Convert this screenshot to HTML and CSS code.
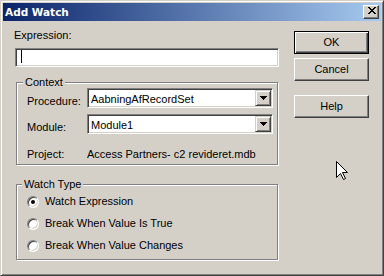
FILE: index.html
```html
<!DOCTYPE html>
<html>
<head>
<meta charset="utf-8">
<link rel="stylesheet" href="styles.css">
</head>
<body>
<div class="window">
  <div class="titlebar">
    <span class="title">Add Watch</span>
    <div class="close">
      <svg width="8" height="7" viewBox="0 0 8 7" shape-rendering="crispEdges"><path d="M0 0h2v1h-2zM6 0h2v1h-2zM1 1h2v1h-2zM5 1h2v1h-2zM2 2h4v1h-4zM3 3h2v1h-2zM2 4h4v1h-4zM1 5h2v1h-2zM5 5h2v1h-2zM0 6h2v1h-2zM6 6h2v1h-2z" fill="#000"/></svg>
    </div>
  </div>
  <div class="body">
    <div class="left">
      <div class="expr-label">Expression:</div>
      <div class="textbox"><span class="caret"></span></div>
      <div class="group context">
        <span class="legend">Context</span>
        <div class="row combo-row">
          <span class="row-label">Procedure:</span>
          <div class="combo"><span class="combo-value">AabningAfRecordSet</span><span class="drop"><svg width="7" height="4" viewBox="0 0 7 4" shape-rendering="crispEdges"><path d="M0 0h7v1h-1v1h-1v1h-1v1h-1v-1h-1v-1h-1v-1h-1z" fill="#000"/></svg></span></div>
        </div>
        <div class="row combo-row row-module">
          <span class="row-label">Module:</span>
          <div class="combo"><span class="combo-value">Module1</span><span class="drop"><svg width="7" height="4" viewBox="0 0 7 4" shape-rendering="crispEdges"><path d="M0 0h7v1h-1v1h-1v1h-1v1h-1v-1h-1v-1h-1v-1h-1z" fill="#000"/></svg></span></div>
        </div>
        <div class="row row-project">
          <span class="row-label">Project:</span>
          <span class="project-value">Access Partners- c2 revideret.mdb</span>
        </div>
      </div>
      <div class="group watch">
        <span class="legend">Watch Type</span>
        <div class="radio-row"><span class="radio checked"></span><span>Watch Expression</span></div>
        <div class="radio-row"><span class="radio"></span><span>Break When Value Is True</span></div>
        <div class="radio-row"><span class="radio"></span><span>Break When Value Changes</span></div>
      </div>
    </div>
    <div class="buttons">
      <div class="btn default">OK</div>
      <div class="btn cancel">Cancel</div>
      <div class="btn help">Help</div>
    </div>
  </div>
  <svg class="cursor" width="13" height="20" viewBox="0 0 13 20"><path d="M0.5 0.5V16.5L4.5 12.5L7.5 18.5L9.5 17.5L6.5 11.5H11.5Z" fill="#fff" stroke="#000" stroke-width="1" stroke-linejoin="miter"/></svg>
</div>
</body>
</html>
```
FILE: styles.css
```css
* { box-sizing: border-box; margin: 0; padding: 0; }
html, body { background: #d4d0c8; }
body {
  font: 11px/13px "Liberation Sans", Arial, sans-serif;
  color: #000;
}
.window {
  position: relative;
  width: 384px;
  height: 276px;
  background: #d4d0c8;
  border: 1px solid;
  border-color: #d4d0c8 #404040 #404040 #d4d0c8;
  box-shadow: inset 1px 1px #fff, inset -1px -1px #808080;
  padding: 2px;
}
.titlebar {
  height: 18px;
  display: flex;
  align-items: center;
  padding-left: 2px;
  background: linear-gradient(to right, #0a246a, #a6caf0);
}
.title {
  color: #fff;
  font-family: "DejaVu Sans", Verdana, sans-serif;
  font-weight: bold;
  font-size: 10.5px;
}
.close {
  margin-left: auto;
  margin-right: 2px;
  width: 16px;
  height: 14px;
  background: #d4d0c8;
  border: 1px solid;
  border-color: #fff #404040 #404040 #fff;
  box-shadow: inset -1px -1px #808080;
  display: flex;
  justify-content: center;
  align-items: flex-start;
  padding-top: 1px;
  padding-left: 1px;
}
.close svg { display: block; }
.body {
  display: flex;
  padding: 8px 0 0 11px;
}
.left { width: 265px; }
.expr-label { height: 13px; }
.textbox {
  margin: 6px 0 0 1px;
  width: 264px;
  height: 19px;
  background: #fff;
  border: 1px solid;
  border-color: #808080 #fff #fff #808080;
  box-shadow: inset 1px 1px #404040, inset -1px -1px #d4d0c8;
  padding: 1px 0 0 5px;
}
.caret {
  display: block;
  width: 1px;
  height: 13px;
  background: #000;
}
.group {
  position: relative;
  margin-left: 2px;
  width: 262px;
  border: 1px solid #808080;
  box-shadow: inset 1px 1px #fff, 1px 1px #fff;
}
.legend {
  position: absolute;
  top: -7px;
  left: 6px;
  padding: 0 2px;
  background: #d4d0c8;
}
.context {
  margin-top: 15px;
  height: 83px;
  padding: 5px 0 0 10px;
}
.row { display: flex; align-items: flex-start; }
.row-label { width: 60px; }
.combo-row .row-label { padding-top: 7px; }
.row-module { margin-top: 6px; }
.row-project { margin-top: 14px; }
.combo {
  width: 186px;
  height: 20px;
  display: flex;
  background: #fff;
  border: 1px solid;
  border-color: #808080 #fff #fff #808080;
  box-shadow: inset 1px 1px #404040, inset -1px -1px #d4d0c8;
  padding: 1px;
}
.combo-value { flex: 1; padding: 3px 0 0 2px; }
.drop {
  width: 16px;
  height: 16px;
  background: #d4d0c8;
  border: 1px solid;
  border-color: #d4d0c8 #404040 #404040 #d4d0c8;
  box-shadow: inset 1px 1px #fff, inset -1px -1px #808080;
  display: flex;
  align-items: center;
  justify-content: center;
}
.drop svg { display: block; }
.watch {
  margin-top: 19px;
  height: 76px;
  padding: 10px 0 0 10px;
  display: flex;
  flex-direction: column;
  gap: 9px;
}
.watch .legend { left: 5px; }
.radio-row { display: flex; align-items: center; height: 13px; }
.radio {
  position: relative;
  width: 12px;
  height: 12px;
  margin-right: 6px;
  border-radius: 50%;
  background: #fff;
  border: 1px solid;
  border-color: #808080 #fff #fff #808080;
  box-shadow: inset 1px 1px #404040, inset -1px -1px #d4d0c8;
}
.radio.checked::after {
  content: "";
  position: absolute;
  left: 3px;
  top: 3px;
  width: 4px;
  height: 4px;
  border-radius: 50%;
  background: #000;
}
.buttons {
  margin: 2px 0 0 15px;
  width: 75px;
  display: flex;
  flex-direction: column;
}
.btn {
  height: 23px;
  width: 75px;
  background: #d4d0c8;
  border: 1px solid;
  border-color: #fff #404040 #404040 #fff;
  box-shadow: inset -1px -1px #808080;
  display: flex;
  align-items: center;
  justify-content: center;
}
.btn.default {
  border-color: #000;
  box-shadow: inset 1px 1px #fff, inset -1px -1px #404040, inset -2px -2px #808080;
}
.cancel { margin-top: 4px; }
.help { margin-top: 14px; }
.cursor {
  position: absolute;
  left: 335px;
  top: 160px;
}
```
